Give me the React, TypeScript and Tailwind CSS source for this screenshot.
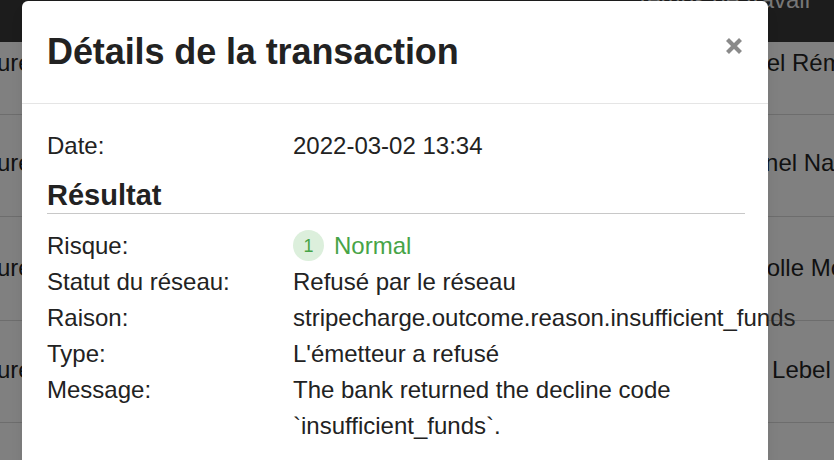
const bgRows = [
  { h: "h-[73px]", pt: "pt-[3px]", name: "Gabriel Rémy", pl: "-ml-[6px]" },
  { h: "h-[102px]", pt: "pt-[30px]", name: "Lionel Nadeau", pl: "pl-[19px]" },
  { h: "h-[104px]", pt: "pt-[33px]", name: "Nicolle Morel", pl: "pl-[18px]" },
  { h: "h-[102px]", pt: "pt-[31px]", name: "Julie Lebel", pl: "pl-[2px]" },
  { h: "h-[102px]", pt: "pt-[31px]", name: "", pl: "pl-[0px]" },
];

const details: { label: string; value: React.ReactNode }[] = [
  { label: "Statut du réseau:", value: "Refusé par le réseau" },
  { label: "Raison:", value: "stripecharge.outcome.reason.insufficient_funds" },
  { label: "Type:", value: "L'émetteur a refusé" },
  {
    label: "Message:",
    value: "The bank returned the decline code `insufficient_funds`.",
  },
];

function CloseIcon() {
  return (
    <svg width="18" height="18" viewBox="0 0 18 18" fill="none">
      <path
        d="M2.5 2.5L15.5 15.5M15.5 2.5L2.5 15.5"
        stroke="#8a8a8a"
        strokeWidth="4.2"
        strokeLinecap="butt"
      />
    </svg>
  );
}

export default function App() {
  return (
    <div
      className="relative h-[460px] w-[834px] overflow-hidden bg-[#808080] text-[#111]"
      style={{ fontFamily: '"Liberation Sans", Arial, sans-serif' }}
    >
      {/* page behind the overlay */}
      <div className="flex h-[42px] justify-end bg-[#1c1c1c] pr-[24px]">
        <span className="-mt-[12px] text-[24px] leading-none text-[#777]">
          Temps de travail
        </span>
      </div>
      {bgRows.map((r, i) => (
        <div
          key={i}
          className={`flex ${r.h} ${r.pt} border-b border-[#6d6d6d] text-[24px] leading-[36px]`}
        >
          <span className="-ml-[3px] w-[717px] shrink-0">{r.name ? "ure" : ""}</span>
          <span className={`whitespace-nowrap ${r.pl}`}>{r.name}</span>
        </div>
      ))}

      {/* modal */}
      <div className="absolute left-[22px] top-[1px] w-[746px] rounded-[6px] bg-white pb-[40px] text-[#222] shadow-lg">
        <div className="flex h-[103px] items-center justify-between border-b border-[#e5e5e5] pl-[25px] pr-[25px]">
          <h1 className="text-[36px] font-bold leading-[1.2] tracking-[-0.1px]">
            Détails de la transaction
          </h1>
          <button className="mt-[36px] self-start">
            <CloseIcon />
          </button>
        </div>

        <div className="pl-[25px] pr-[23px] pt-[24px] text-[24px] leading-[36px]">
          <div className="grid grid-cols-[246px_minmax(0,1fr)]">
            <div>Date:</div>
            <div>2022-03-02 13:34</div>
          </div>

          <h2 className="mb-[14px] mt-[14px] border-b border-[#c8c8c8] text-[29px] font-bold leading-[1.2]">
            Résultat
          </h2>

          <div className="grid grid-cols-[246px_minmax(0,1fr)]">
            <div>Risque:</div>
            <div className="flex items-center gap-[10px] text-[#47a447]">
              <span className="flex h-[31px] w-[31px] items-center justify-center rounded-full bg-[#dcefdc] text-[18px] leading-none">
                1
              </span>
              <span>Normal</span>
            </div>
            {details.map((d) => (
              <div key={d.label} className="contents">
                <div>{d.label}</div>
                <div className="whitespace-normal">{d.value}</div>
              </div>
            ))}
          </div>
        </div>
      </div>
    </div>
  );
}
